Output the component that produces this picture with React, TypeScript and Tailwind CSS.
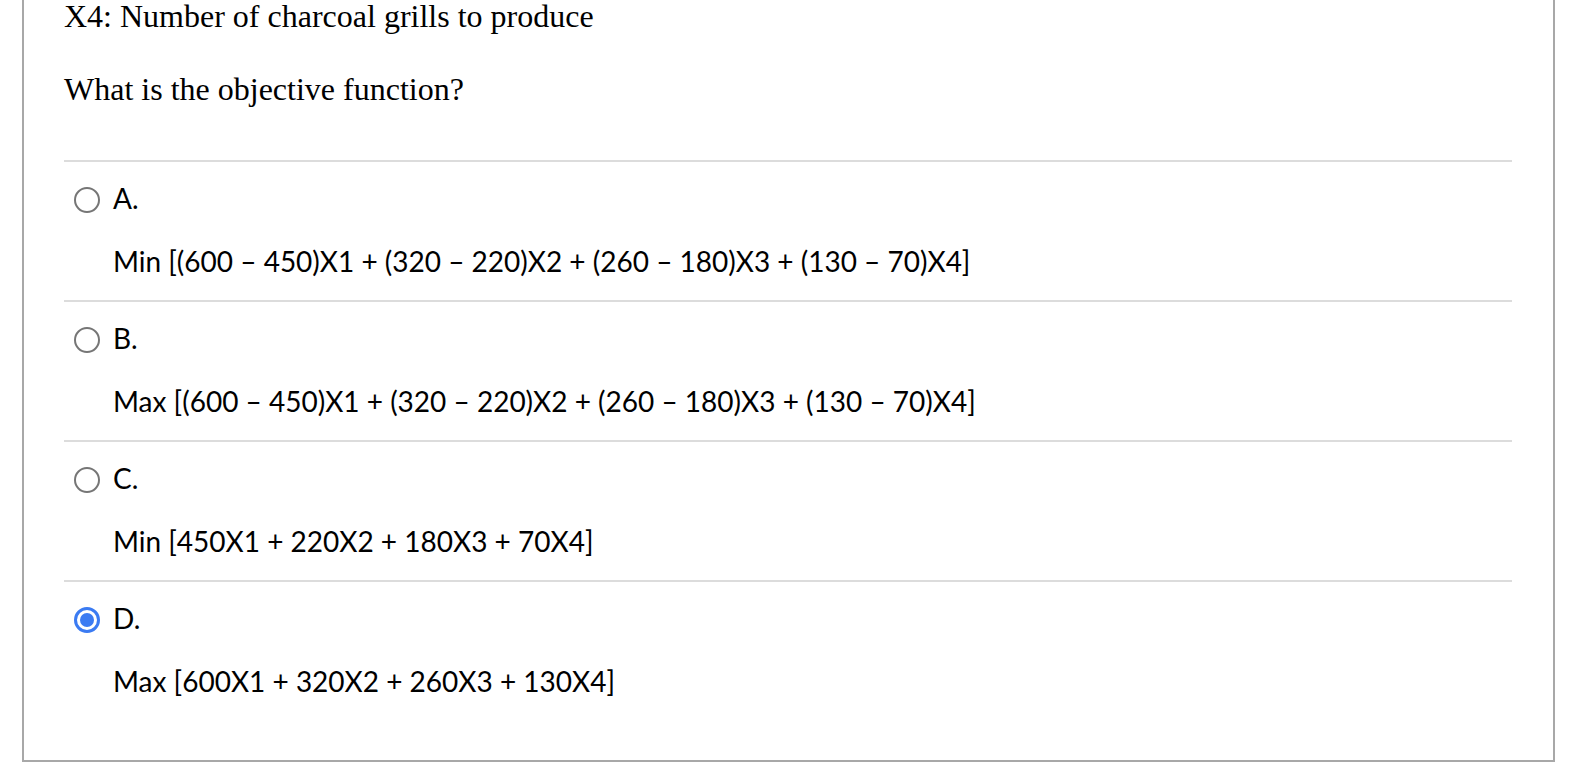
import React from "react";

const options = [
  { label: "A.", text: "Min [(600 – 450)X1 + (320 – 220)X2 + (260 – 180)X3 + (130 – 70)X4]", checked: false },
  { label: "B.", text: "Max [(600 – 450)X1 + (320 – 220)X2 + (260 – 180)X3 + (130 – 70)X4]", checked: false },
  { label: "C.", text: "Min [450X1 + 220X2 + 180X3 + 70X4]", checked: false },
  { label: "D.", text: "Max [600X1 + 320X2 + 260X3 + 130X4]", checked: true },
];

function Radio({ checked }: { checked: boolean }) {
  if (checked) {
    return (
      <div className="w-[26px] h-[26px] rounded-full border-[3px] border-[#3b7bf2] flex items-center justify-center shrink-0">
        <div className="w-[14px] h-[14px] rounded-full bg-[#3b7bf2]" />
      </div>
    );
  }
  return <div className="w-[26px] h-[26px] rounded-full border-2 border-[#767676] bg-white shrink-0" />;
}

export default function App() {
  return (
    <div className="bg-white min-h-screen pl-[22px] pr-[19px]">
      <div className="border-2 border-t-0 border-[#a8a8a8] pl-[40px] pr-[41px] pb-[40px]">
        <p className="font-['Liberation_Serif',serif] text-[32px] leading-[33px] text-black m-0">
          X4: Number of charcoal grills to produce
        </p>
        <p className="font-['Liberation_Serif',serif] text-[32px] leading-[33px] text-black mt-[40px] mb-[54px]">
          What is the objective function?
        </p>
        <div className="font-['Lato',sans-serif] text-[28px] text-black">
          {options.map((o) => (
            <div key={o.label} className="border-t-2 border-[#dcdcdc] pt-[19px] pb-[22px]">
              <div className="flex items-start h-[34px] pl-[10px] gap-[13px]">
                <div className="mt-[6px]">
                  <Radio checked={o.checked} />
                </div>
                <span className="leading-[34px]">{o.label}</span>
              </div>
              <div className="pl-[49px] mt-[29px] leading-[34px] whitespace-nowrap">{o.text}</div>
            </div>
          ))}
        </div>
      </div>
    </div>
  );
}
